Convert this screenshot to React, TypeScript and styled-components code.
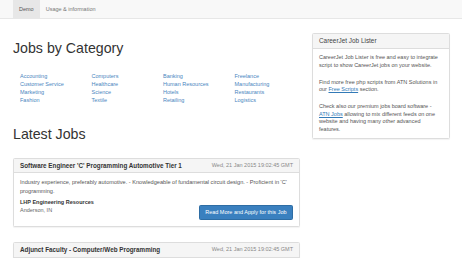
import * as React from "react";
import styled, { createGlobalStyle } from "styled-components";

const GlobalStyle = createGlobalStyle`
  html, body {
    margin: 0;
    padding: 0;
    background: #fff;
    font-family: "Liberation Sans", Arial, sans-serif;
    color: #333;
  }
`;

const categories = [
  ["Accounting", "Customer Service", "Marketing", "Fashion"],
  ["Computers", "Healthcare", "Science", "Textile"],
  ["Banking", "Human Resources", "Hotels", "Retailing"],
  ["Freelance", "Manufacturing", "Restaurants", "Logistics"]
];

const Navbar = styled.div`
  height: 18px;
  background: #f8f8f8;
  border-bottom: 1px solid #e7e7e7;
  display: flex;
  padding-left: 13px;
`;

const NavTab = styled.a<{ $active?: boolean }>`
  display: block;
  padding: 0 6px;
  line-height: 18px;
  font-size: 5.5px;
  color: ${p => (p.$active ? "#555" : "#777")};
  background: ${p => (p.$active ? "#e7e7e7" : "transparent")};
  text-decoration: none;
`;

const Page = styled.div`
  display: flex;
  gap: 12px;
  padding: 0 12px 0 13px;
`;

const Main = styled.div`
  flex: 0 0 287px;
  width: 287px;
  min-width: 0;
`;

const Side = styled.div`
  flex: 0 0 138px;
  width: 138px;
  min-width: 0;
  padding-top: 14px;
`;

const Heading = styled.h1<{ $top: number }>`
  margin: ${p => p.$top}px 0 0;
  font-size: 14.2px;
  line-height: 17px;
  font-weight: normal;
  color: #333;
`;

const CategoryGrid = styled.div`
  display: grid;
  grid-template-columns: repeat(4, 71.5px);
  margin-top: 15px;
  padding-left: 7px;
`;

const CategoryColumn = styled.div`
  display: flex;
  flex-direction: column;
`;

const CategoryLink = styled.a`
  font-size: 5.5px;
  line-height: 8px;
  color: #4a86c0;
  text-decoration: none;
  white-space: nowrap;
`;

const Card = styled.div<{ $top: number }>`
  margin-top: ${p => p.$top}px;
  border: 1px solid #ddd;
  border-radius: 1.5px;
  box-shadow: 0 1px 1px rgba(0, 0, 0, 0.05);
  background: #fff;
`;

const CardHeader = styled.div`
  display: flex;
  justify-content: space-between;
  align-items: center;
  padding: 3px 6px;
  background: #f5f5f5;
  border-bottom: 1px solid #ddd;
  line-height: 7.8px;
  font-size: 5.5px;
`;

const JobTitle = styled.span`
  font-size: 6.3px;
  font-weight: bold;
  color: #333;
  white-space: nowrap;
`;

const JobDate = styled.span`
  color: #888;
  white-space: nowrap;
`;

const CardBody = styled.div`
  padding: 5px 6px 6px;
  font-size: 5.5px;
`;

const Summary = styled.p`
  margin: 0 0 3.5px;
  font-size: 5.6px;
  line-height: 8.5px;
  color: #555;
`;

const CompanyRow = styled.div`
  display: flex;
  justify-content: space-between;
  align-items: flex-end;
`;

const Company = styled.div`
  line-height: 7.8px;
  margin-bottom: 5.4px;
  color: #666;
  strong {
    color: #333;
  }
`;

const ApplyButton = styled.a`
  display: block;
  height: 13px;
  line-height: 13px;
  padding: 0 5.5px;
  border-radius: 1.5px;
  background: #3a80bf;
  border: 0.5px solid #2e6da4;
  color: #fff;
  font-size: 5.5px;
  text-decoration: none;
  white-space: nowrap;
`;

const Panel = styled.div`
  border: 1px solid #ddd;
  border-radius: 1.5px;
  box-shadow: 0 1px 1px rgba(0, 0, 0, 0.05);
`;

const PanelHeader = styled.div`
  padding: 3px 6px;
  background: #f5f5f5;
  border-bottom: 1px solid #ddd;
  font-size: 6.4px;
  line-height: 7.5px;
  color: #444;
`;

const PanelBody = styled.div`
  padding: 5.5px 6px 5px;
  font-size: 5.5px;
  line-height: 7.5px;
  color: #555;
  p {
    margin: 0 0 9.5px;
    white-space: nowrap;
  }
  p:last-child {
    margin-bottom: 0;
  }
  a {
    color: #337ab7;
    text-decoration: underline;
  }
`;

export default function App() {
  return (
    <>
      <GlobalStyle />
      <Navbar>
        <NavTab $active>Demo</NavTab>
        <NavTab>Usage &amp; information</NavTab>
      </Navbar>
      <Page>
        <Main>
          <Heading $top={21}>Jobs by Category</Heading>
          <CategoryGrid>
            {categories.map((col, i) => (
              <CategoryColumn key={i}>
                {col.map(name => (
                  <CategoryLink key={name}>{name}</CategoryLink>
                ))}
              </CategoryColumn>
            ))}
          </CategoryGrid>

          <Heading $top={22}>Latest Jobs</Heading>
          <Card $top={14.5}>
            <CardHeader>
              <JobTitle>Software Engineer 'C' Programming Automotive Tier 1</JobTitle>
              <JobDate>Wed, 21 Jan 2015 19:02:45 GMT</JobDate>
            </CardHeader>
            <CardBody>
              <Summary>
                Industry experience, preferably automotive. - Knowledgeable of fundamental circuit design. - Proficient in 'C'
                <br />
                programming.
              </Summary>
              <CompanyRow>
                <Company>
                  <strong>LHP Engineering Resources</strong>
                  <br />
                  Anderson, IN
                </Company>
                <ApplyButton>Read More and Apply for this Job</ApplyButton>
              </CompanyRow>
            </CardBody>
          </Card>
          <Card $top={15}>
            <CardHeader>
              <JobTitle>Adjunct Faculty - Computer/Web Programming</JobTitle>
              <JobDate>Wed, 21 Jan 2015 19:02:45 GMT</JobDate>
            </CardHeader>
            <CardBody>
              <Summary>&nbsp;</Summary>
            </CardBody>
          </Card>
        </Main>

        <Side>
          <Panel>
            <PanelHeader>CareerJet Job Lister</PanelHeader>
            <PanelBody>
              <p>
                CareerJet Job Lister is free and easy to integrate
                <br />
                script to show CareerJet jobs on your website.
              </p>
              <p>
                Find more free php scripts from ATN Solutions in
                <br />
                our <a>Free Scripts</a> section.
              </p>
              <p>
                Check also our premium jobs board software -
                <br />
                <a>ATN Jobs</a> allowing to mix different feeds on one
                <br />
                website and having many other advanced
                <br />
                features.
              </p>
            </PanelBody>
          </Panel>
        </Side>
      </Page>
    </>
  );
}
